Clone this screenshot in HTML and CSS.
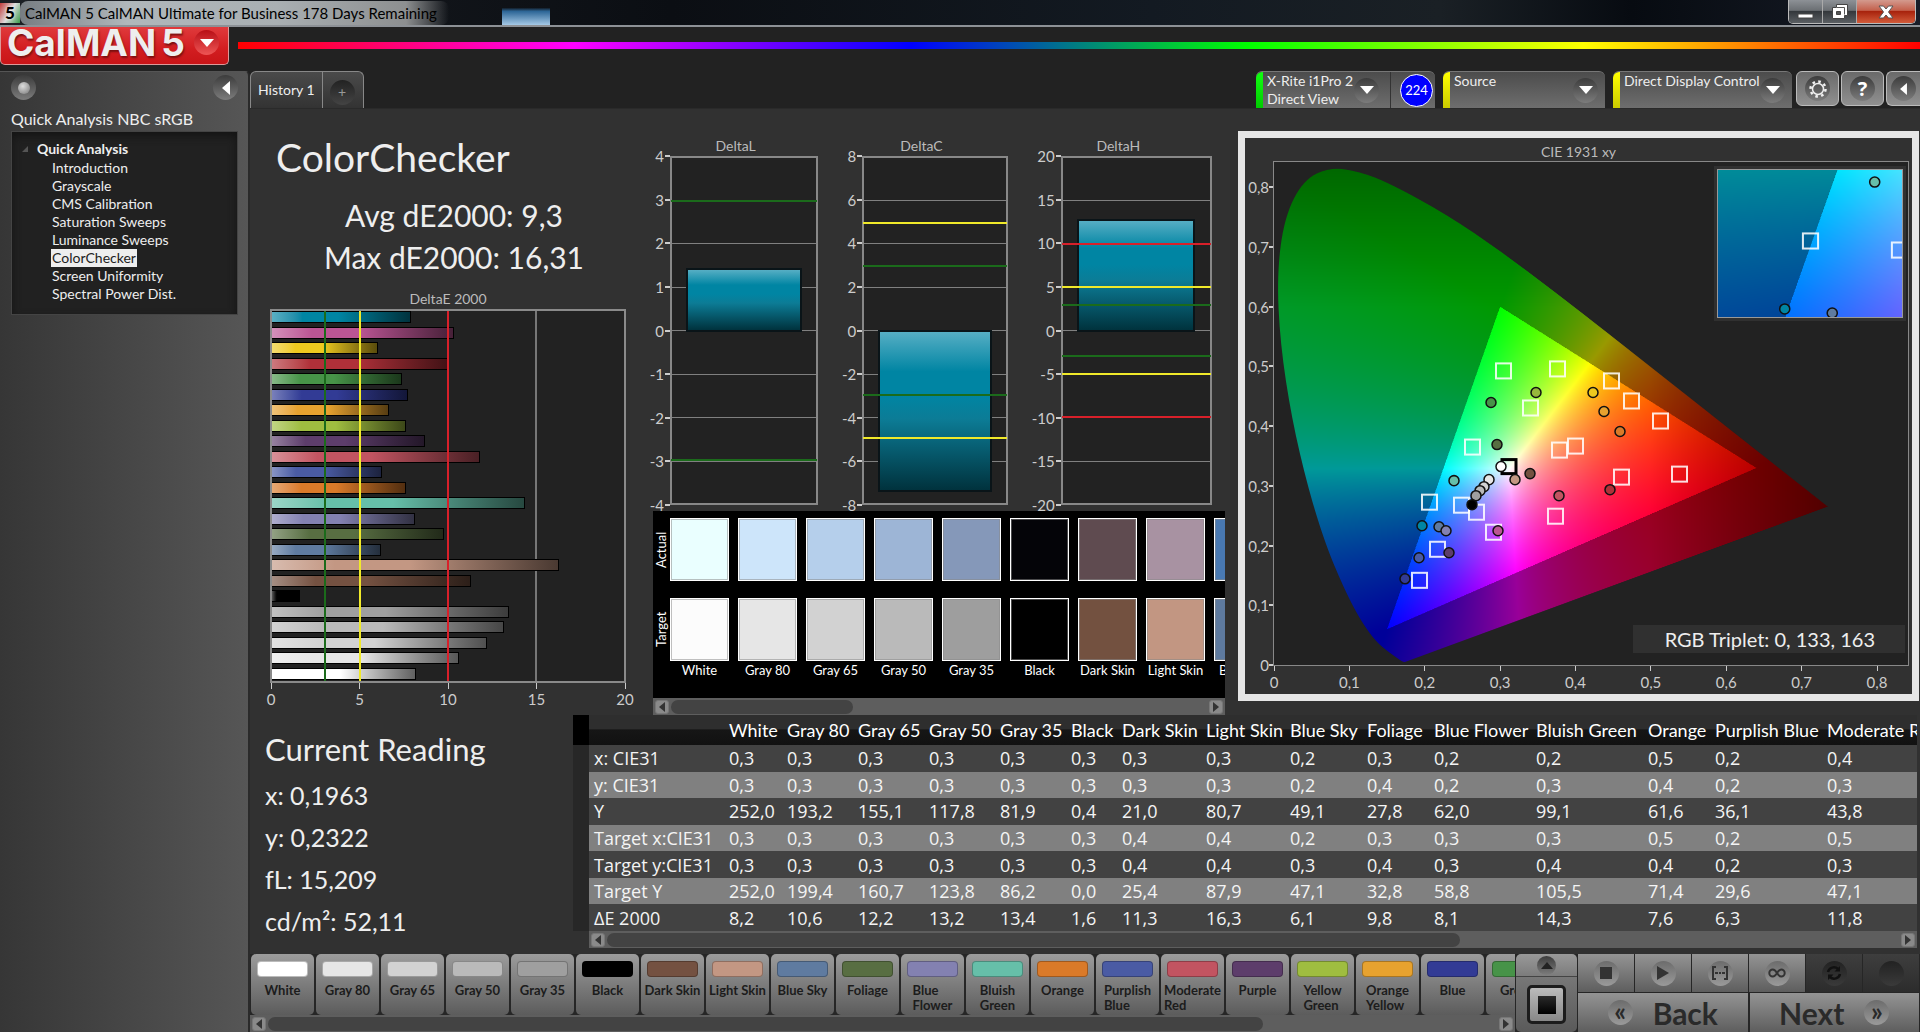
FILE: index.html
```html
<!DOCTYPE html>
<html lang="en">
<head>
<meta charset="utf-8">
<title>CalMAN 5</title>
<link rel="stylesheet" href="styles.css">
</head>
<body>
<div class="app">
  <header class="titlebar">
    <span class="app-icon">5</span>
    <span class="title-text">CalMAN 5 CalMAN Ultimate for Business 178 Days Remaining</span>
    <div class="window-buttons">
      <button class="win" aria-label="Minimize"><svg width="18" height="18" viewBox="0 0 18 18"><rect x="1" y="11" width="15" height="4" fill="#fff" stroke="#444"/></svg></button>
      <button class="win" aria-label="Restore"><svg width="18" height="18" viewBox="0 0 18 18"><path d="M5.500 1.500h11v11h-3v3h-12v-11h4z" fill="#fff" stroke="#444"/><path d="M5.500 8.500h4v3h-4z" fill="#555" stroke="#444"/><path d="M6 4.500h7.500v7" fill="none" stroke="#555"/></svg></button>
      <button class="win win-close" aria-label="Close"><svg width="18" height="18" viewBox="0 0 18 18"><path d="M2 3h4.500L9 6l2.500-3H16l-4.500 6 4.500 6h-4.500L9 12l-2.500 3H2l4.500-6z" fill="#fff" stroke="#555"/></svg></button>
    </div>
  </header>

  <div class="brandbar">
    <button class="logo"><span class="logo-text">CalMAN</span><span class="logo-five">5</span>
      <span class="round red"><svg width="14" height="8" viewBox="0 0 14 8"><path d="M0 0h14L7 8z" fill="#fff"/></svg></span></button>
    <div class="rainbow"></div>
  </div>

  <div class="body">
    <aside class="sidebar">
      <div class="side-top">
        <button class="round" aria-label="Record"><span class="knob"></span></button>
        <button class="round" aria-label="Collapse"><svg width="8" height="14" viewBox="0 0 8 14"><path d="M8 0v14L0 7z" fill="#fff"/></svg></button>
      </div>
      <h2 class="side-title">Quick Analysis NBC sRGB</h2>
      <nav class="tree">
        <div class="tree-root"><svg width="6" height="6" viewBox="0 0 6 6"><path d="M6 0v6H0z" fill="#555"/></svg>Quick Analysis</div>
        <a href="#">Introduction</a>
        <a href="#">Grayscale</a>
        <a href="#">CMS Calibration</a>
        <a href="#">Saturation Sweeps</a>
        <a href="#">Luminance Sweeps</a>
        <a href="#" class="selected">ColorChecker</a>
        <a href="#">Screen Uniformity</a>
        <a href="#">Spectral Power Dist.</a>
      </nav>
    </aside>

    <main class="main">
      <div class="strip">
        <div class="tabs">
          <button class="tab">History 1</button>
          <button class="tab tab-add" aria-label="Add tab"><span class="round dark">+</span></button>
        </div>
        <div class="devices">
          <div class="device">
            <i class="flag green"></i>
            <span class="device-name">X-Rite i1Pro 2<br>Direct View</span>
            <button class="round" aria-label="Meter menu"><svg width="14" height="8" viewBox="0 0 14 8"><path d="M0 0h14L7 8z" fill="#fff"/></svg></button>
            <span class="count-cell"><span class="count">224</span></span>
          </div>
          <div class="device source">
            <i class="flag"></i>
            <span class="device-name">Source</span>
            <button class="round" aria-label="Source menu"><svg width="14" height="8" viewBox="0 0 14 8"><path d="M0 0h14L7 8z" fill="#fff"/></svg></button>
          </div>
          <div class="device display">
            <i class="flag"></i>
            <span class="device-name">Direct Display Control</span>
            <button class="round" aria-label="Display menu"><svg width="14" height="8" viewBox="0 0 14 8"><path d="M0 0h14L7 8z" fill="#fff"/></svg></button>
          </div>
          <div class="tools">
            <button class="tool" aria-label="Settings"><span class="round"><svg width="20" height="20" viewBox="0 0 20 20" fill="none" stroke="#eee"><circle cx="10" cy="10" r="5.500" stroke-width="1.500"/><circle cx="10" cy="10" r="7.500" stroke-width="2.500" stroke-dasharray="2.600 3.290"/></svg></span></button>
            <button class="tool" aria-label="Help"><span class="round help">?</span></button>
            <button class="tool last" aria-label="Hide"><span class="round"><svg width="7" height="12" viewBox="0 0 8 14"><path d="M8 0v14L0 7z" fill="#fff"/></svg></span></button>
          </div>
        </div>
      </div>

      <div class="workspace">
        <div class="upper">
          <section class="summary">
            <h1>ColorChecker</h1>
            <p class="stat">Avg dE2000: 9,3</p>
            <p class="stat">Max dE2000: 16,31</p>
            <h3 class="chart-title">DeltaE 2000</h3>
            <div class="bars">
              <i class="grid" style="left:50%"></i><i class="grid" style="left:75%"></i>
              <b style="width:39.400%;--c:#0085a3"></b>
              <b style="width:51.800%;--c:#bb5594"></b>
              <b style="width:30.100%;--c:#eec91f"></b>
              <b style="width:50.100%;--c:#b03039"></b>
              <b style="width:37%;--c:#479348"></b>
              <b style="width:38.600%;--c:#323b95"></b>
              <b style="width:33.200%;--c:#e7a22f"></b>
              <b style="width:38%;--c:#9fbd40"></b>
              <b style="width:43.400%;--c:#5d3d6b"></b>
              <b style="width:59%;--c:#c25461"></b>
              <b style="width:31.300%;--c:#4a5ba4"></b>
              <b style="width:38%;--c:#da7a29"></b>
              <b style="width:72%;--c:#66bfa9"></b>
              <b style="width:40.500%;--c:#8381b1"></b>
              <b style="width:49%;--c:#586e42"></b>
              <b style="width:31%;--c:#5f7ba0"></b>
              <b style="width:81.500%;--c:#c39783"></b>
              <b style="width:56.600%;--c:#745141"></b>
              <b style="width:8%;--c:#000"></b>
              <b style="width:67.200%;--c:#9f9f9f"></b>
              <b style="width:65.800%;--c:#bababa"></b>
              <b style="width:61.200%;--c:#d2d2d2"></b>
              <b style="width:53.200%;--c:#e6e6e6"></b>
              <b style="width:41%;--c:#fff"></b>
              <i class="limit lgreen" style="left:15%"></i><i class="limit lyellow" style="left:25%"></i><i class="limit lred" style="left:50%"></i>
            </div>
            <div class="axis-x"><span>0</span><span>5</span><span>10</span><span>15</span><span>20</span></div>
          </section>

          <section class="middle">
            <div class="deltas">
              <figure class="delta narrow">
                <figcaption class="chart-title">DeltaL</figcaption>
                <div class="delta-row">
                  <div class="axis-y"><span>4</span><span>3</span><span>2</span><span>1</span><span>0</span><span>-1</span><span>-2</span><span>-3</span><span>-4</span></div>
                  <div class="plot">
                    <b style="top:32%;height:18.500%"></b>
                    <i class="lgreen" style="top:12.500%"></i><i class="lgreen" style="top:87.500%"></i>
                  </div>
                </div>
              </figure>
              <figure class="delta">
                <figcaption class="chart-title">DeltaC</figcaption>
                <div class="delta-row">
                  <div class="axis-y"><span>8</span><span>6</span><span>4</span><span>2</span><span>0</span><span>-2</span><span>-4</span><span>-6</span><span>-8</span></div>
                  <div class="plot">
                    <b style="top:49.800%;height:47%"></b>
                    <i class="lyellow" style="top:18.750%"></i><i class="lgreen" style="top:31.250%"></i><i class="lgreen" style="top:68.750%"></i><i class="lyellow" style="top:81.250%"></i>
                  </div>
                </div>
              </figure>
              <figure class="delta wide">
                <figcaption class="chart-title">DeltaH</figcaption>
                <div class="delta-row">
                  <div class="axis-y"><span>20</span><span>15</span><span>10</span><span>5</span><span>0</span><span>-5</span><span>-10</span><span>-15</span><span>-20</span></div>
                  <div class="plot">
                    <b style="top:17.700%;height:32.800%"></b>
                    <i class="lred" style="top:25%"></i><i class="lyellow" style="top:37.500%"></i><i class="lgreen" style="top:42.500%"></i><i class="lgreen" style="top:57.500%"></i><i class="lyellow" style="top:62.500%"></i><i class="lred" style="top:75%"></i>
                  </div>
                </div>
              </figure>
            </div>
            <div class="swatches">
              <div class="swatch-side"><span>Actual</span><span>Target</span></div>
              <div class="swatch-list">
                <div class="swatch"><i style="background:#eaffff"></i><i style="background:#fcfcfc"></i><span>White</span></div>
                <div class="swatch"><i style="background:#cde5fa"></i><i style="background:#e6e6e6"></i><span>Gray 80</span></div>
                <div class="swatch"><i style="background:#b5cfeb"></i><i style="background:#d2d2d2"></i><span>Gray 65</span></div>
                <div class="swatch"><i style="background:#9db5d6"></i><i style="background:#bababa"></i><span>Gray 50</span></div>
                <div class="swatch"><i style="background:#8598b9"></i><i style="background:#9e9e9e"></i><span>Gray 35</span></div>
                <div class="swatch"><i style="background:#040408"></i><i style="background:#000"></i><span>Black</span></div>
                <div class="swatch"><i style="background:#5f4b50"></i><i style="background:#735140"></i><span>Dark Skin</span></div>
                <div class="swatch"><i style="background:#a892a2"></i><i style="background:#c29682"></i><span>Light Skin</span></div>
                <div class="swatch"><i style="background:#4979b2"></i><i style="background:#5e7a9f"></i><span>Blue Sky</span></div>
              </div>
            </div>
            <div class="scroll"><button class="arrow left" aria-label="Scroll left"></button><div class="track"><div class="thumb" style="width:34%"></div></div><button class="arrow right" aria-label="Scroll right"></button></div>
          </section>

          <section class="cie">
            <h3 class="chart-title">CIE 1931 xy</h3>
            <div class="cie-row">
              <div class="cie-y"><span>0,8</span><span>0,7</span><span>0,6</span><span>0,5</span><span>0,4</span><span>0,3</span><span>0,2</span><span>0,1</span><span>0</span></div>
              <div class="cie-plot">
                <canvas id="cie" width="1268" height="1004"></canvas>
                <svg class="marks" viewBox="-1 0 634 502" preserveAspectRatio="none">
                  <g class="sq">
                    <rect x="221" y="201" width="15" height="15"/><rect x="275" y="199" width="15" height="15"/><rect x="248" y="238" width="15" height="15"/>
                    <rect x="329" y="211" width="15" height="15"/><rect x="349" y="231" width="15" height="15"/><rect x="378" y="251" width="15" height="15"/>
                    <rect x="190" y="277" width="15" height="15"/><rect x="277" y="280" width="15" height="15"/><rect x="293" y="276" width="15" height="15"/>
                    <rect x="339" y="307" width="15" height="15"/><rect x="397" y="304" width="15" height="15"/><rect x="273" y="346" width="15" height="15"/>
                    <rect x="147" y="332" width="15" height="15"/><rect x="179" y="335" width="15" height="15"/><rect x="194" y="342" width="15" height="15"/>
                    <rect x="211" y="362" width="15" height="15"/><rect x="155" y="379" width="15" height="15"/><rect x="137" y="410" width="15" height="15"/>
                    <rect class="ref" x="227" y="297" width="14" height="14"/>
                  </g>
                  <g class="dots">
                    <circle cx="261" cy="230" r="5" fill="#97b83c"/><circle cx="216" cy="240" r="5" fill="#479348"/><circle cx="318" cy="230" r="5" fill="#eec91f"/>
                    <circle cx="329" cy="249" r="5" fill="#e7a22f"/><circle cx="345" cy="269" r="5" fill="#da7a29"/><circle cx="222" cy="282" r="5" fill="#586e42"/>
                    <circle cx="214" cy="317" r="5" fill="#e6e6e6"/><circle cx="209" cy="324" r="5" fill="#d2d2d2"/><circle cx="205" cy="328" r="5" fill="#bababa"/><circle cx="201" cy="333" r="5" fill="#9f9f9f"/>
                    <circle cx="226" cy="304" r="5" fill="#fff"/><circle cx="197" cy="342" r="5" fill="#000"/><circle cx="179" cy="318" r="5" fill="#66bfa9"/>
                    <circle cx="240" cy="317" r="5" fill="#c39783"/><circle cx="255" cy="311" r="5" fill="#745141"/><circle cx="284" cy="333" r="5" fill="#c25461"/>
                    <circle cx="335" cy="327" r="5" fill="#b03039"/><circle cx="147" cy="363" r="5" fill="#0085a3"/><circle cx="164" cy="364" r="5" fill="#5f7ba0"/>
                    <circle cx="171" cy="368" r="5" fill="#8381b1"/><circle cx="223" cy="368" r="5" fill="#bb5594"/><circle cx="174" cy="390" r="5" fill="#5d3d6b"/>
                    <circle cx="144" cy="395" r="5" fill="#4a5ba4"/><circle cx="130" cy="416" r="5" fill="#323b95"/>
                  </g>
                </svg>
                <div class="inset">
                  <canvas id="inset" width="370" height="296"></canvas>
                  <svg class="marks" viewBox="0 0 182 146" preserveAspectRatio="none">
                    <g class="sq"><rect x="84" y="63" width="15" height="15"/><rect x="172" y="72" width="15" height="15"/></g>
                    <g class="dots"><circle cx="155" cy="12" r="5" fill="#66bfa9"/><circle cx="66" cy="138" r="5" fill="#0085a3"/><circle cx="113" cy="142" r="5" fill="#5f7ba0"/></g>
                  </svg>
                </div>
                <div class="triplet">RGB Triplet: 0, 133, 163</div>
              </div>
            </div>
            <div class="cie-x"><span>0</span><span>0,1</span><span>0,2</span><span>0,3</span><span>0,4</span><span>0,5</span><span>0,6</span><span>0,7</span><span>0,8</span></div>
          </section>
        </div>

        <div class="lower">
          <section class="reading">
            <h2>Current Reading</h2>
            <p>x: 0,1963</p>
            <p>y: 0,2322</p>
            <p>fL: 15,209</p>
            <p>cd/m²: 52,11</p>
          </section>
          <section class="results">
            <table>
              <colgroup><col class="c0"><col class="c1"><col class="c2"><col class="c3"><col class="c3"><col class="c3"><col class="c3"><col class="c4"><col class="c5"><col class="c5"><col class="c6"><col class="c7"><col class="c8"><col class="c9"><col class="c7"><col class="c9"><col></colgroup>
              <thead><tr><th class="rh"></th><th></th><th>White</th><th>Gray 80</th><th>Gray 65</th><th>Gray 50</th><th>Gray 35</th><th>Black</th><th>Dark Skin</th><th>Light Skin</th><th>Blue Sky</th><th>Foliage</th><th>Blue Flower</th><th>Bluish Green</th><th>Orange</th><th>Purplish Blue</th><th>Moderate Red</th></tr></thead>
              <tbody>
                <tr><td class="rh"></td><th>x: CIE31</th><td>0,3</td><td>0,3</td><td>0,3</td><td>0,3</td><td>0,3</td><td>0,3</td><td>0,3</td><td>0,3</td><td>0,2</td><td>0,3</td><td>0,2</td><td>0,2</td><td>0,5</td><td>0,2</td><td>0,4</td></tr>
                <tr><td class="rh"></td><th>y: CIE31</th><td>0,3</td><td>0,3</td><td>0,3</td><td>0,3</td><td>0,3</td><td>0,3</td><td>0,3</td><td>0,3</td><td>0,2</td><td>0,4</td><td>0,2</td><td>0,3</td><td>0,4</td><td>0,2</td><td>0,3</td></tr>
                <tr><td class="rh"></td><th>Y</th><td>252,0</td><td>193,2</td><td>155,1</td><td>117,8</td><td>81,9</td><td>0,4</td><td>21,0</td><td>80,7</td><td>49,1</td><td>27,8</td><td>62,0</td><td>99,1</td><td>61,6</td><td>36,1</td><td>43,8</td></tr>
                <tr><td class="rh"></td><th>Target x:CIE31</th><td>0,3</td><td>0,3</td><td>0,3</td><td>0,3</td><td>0,3</td><td>0,3</td><td>0,4</td><td>0,4</td><td>0,2</td><td>0,3</td><td>0,3</td><td>0,3</td><td>0,5</td><td>0,2</td><td>0,5</td></tr>
                <tr><td class="rh"></td><th>Target y:CIE31</th><td>0,3</td><td>0,3</td><td>0,3</td><td>0,3</td><td>0,3</td><td>0,3</td><td>0,4</td><td>0,4</td><td>0,3</td><td>0,4</td><td>0,3</td><td>0,4</td><td>0,4</td><td>0,2</td><td>0,3</td></tr>
                <tr><td class="rh"></td><th>Target Y</th><td>252,0</td><td>199,4</td><td>160,7</td><td>123,8</td><td>86,2</td><td>0,0</td><td>25,4</td><td>87,9</td><td>47,1</td><td>32,8</td><td>58,8</td><td>105,5</td><td>71,4</td><td>29,6</td><td>47,1</td></tr>
                <tr><td class="rh"></td><th>ΔE 2000</th><td>8,2</td><td>10,6</td><td>12,2</td><td>13,2</td><td>13,4</td><td>1,6</td><td>11,3</td><td>16,3</td><td>6,1</td><td>9,8</td><td>8,1</td><td>14,3</td><td>7,6</td><td>6,3</td><td>11,8</td></tr>
              </tbody>
            </table>
            <div class="scroll"><button class="arrow left" aria-label="Scroll left"></button><div class="track"><div class="thumb" style="width:66%"></div></div><button class="arrow right" aria-label="Scroll right"></button></div>
          </section>
        </div>
      </div>

      <footer class="bottom">
        <div class="patches">
          <div class="patch-list">
            <button class="patch"><i style="background:#fff"></i>White</button>
            <button class="patch"><i style="background:#e6e6e6"></i>Gray 80</button>
            <button class="patch"><i style="background:#d2d2d2"></i>Gray 65</button>
            <button class="patch"><i style="background:#bababa"></i>Gray 50</button>
            <button class="patch"><i style="background:#9f9f9f"></i>Gray 35</button>
            <button class="patch"><i style="background:#000"></i>Black</button>
            <button class="patch"><i style="background:#745141"></i>Dark Skin</button>
            <button class="patch"><i style="background:#c39783"></i>Light Skin</button>
            <button class="patch"><i style="background:#5f7ba0"></i>Blue Sky</button>
            <button class="patch"><i style="background:#586e42"></i>Foliage</button>
            <button class="patch"><i style="background:#8381b1"></i><span>Blue<br>Flower</span></button>
            <button class="patch"><i style="background:#66bfa9"></i><span>Bluish<br>Green</span></button>
            <button class="patch"><i style="background:#da7a29"></i>Orange</button>
            <button class="patch"><i style="background:#4a5ba4"></i><span>Purplish<br>Blue</span></button>
            <button class="patch"><i style="background:#c25461"></i><span>Moderate<br>Red</span></button>
            <button class="patch"><i style="background:#5d3d6b"></i>Purple</button>
            <button class="patch"><i style="background:#9fbd40"></i><span>Yellow<br>Green</span></button>
            <button class="patch"><i style="background:#e7a22f"></i><span>Orange<br>Yellow</span></button>
            <button class="patch"><i style="background:#323b95"></i>Blue</button>
            <button class="patch"><i style="background:#479348"></i>Green</button>
          </div>
          <div class="scroll"><button class="arrow left" aria-label="Scroll left"></button><div class="track"><div class="thumb" style="width:81%"></div></div><button class="arrow right" aria-label="Scroll right"></button></div>
        </div>
        <div class="pattern">
          <button class="pattern-up" aria-label="Expand"><span class="round small"><svg width="12" height="7" viewBox="0 0 12 7"><path d="M0 7h12L6 0z" fill="#222"/></svg></span></button>
          <button class="pattern-window" aria-label="Pattern window"><span></span></button>
        </div>
        <div class="transport">
          <div class="media">
            <button aria-label="Stop"><span class="round"><svg width="12" height="12" viewBox="0 0 12 12"><path d="M0 0h12v12H0z" fill="#333"/></svg></span></button>
            <button aria-label="Play"><span class="round"><svg width="12" height="14" viewBox="0 0 12 14"><path d="M0 0l12 7-12 7z" fill="#333"/></svg></span></button>
            <button aria-label="Read series"><span class="round"><svg width="18" height="14" viewBox="0 0 18 14" fill="none" stroke="#333" stroke-width="2"><path d="M5 1H2v12h3M13 1h3v12h-3M4 7h3M8 7h2M11 7h3"/></svg></span></button>
            <button aria-label="Continuous"><span class="round"><svg width="18" height="10" viewBox="0 0 18 10" fill="none" stroke="#333" stroke-width="2"><path d="M9 5C7.500 2.500 6.500 1.500 4.800 1.500a3.500 3.500 0 0 0 0 7C6.500 8.500 7.500 7.500 9 5s2.500-3.500 4.200-3.500a3.500 3.500 0 0 1 0 7C11.500 8.500 10.500 7.500 9 5z"/></svg></span></button>
            <button class="off" aria-label="Refresh"><span class="round"><svg width="16" height="16" viewBox="0 0 16 16" fill="none" stroke="#111" stroke-width="2.500"><path d="M2 7a6 6 0 0 1 10-3M14 9a6 6 0 0 1-10 3"/><path d="M14 1v5.500H8.500zM2 15V9.500h5.500z" fill="#111" stroke="none"/></svg></span></button>
            <button class="off" aria-label="Unused"><span class="round"></span></button>
          </div>
          <div class="nav">
            <button><span class="round">«</span>Back</button>
            <button>Next<span class="round">»</span></button>
          </div>
        </div>
      </footer>
    </main>
  </div>
</div>
<script src="chart.js"></script>
</body>
</html>
```
FILE: styles.css
```css
* { box-sizing: border-box; }
body { margin: 0; background: #222; color: #eee; font: 14px/18px Lato, "Open Sans", sans-serif; }
button { font: inherit; color: inherit; border: 0; padding: 0; background: none; }
h1, h2, h3, p, figure { margin: 0; font-weight: 400; }
svg { display: block; }
.app { min-height: 100vh; display: flex; flex-direction: column; overflow: hidden; }

.round { flex: none; display: flex; align-items: center; justify-content: center; width: 25px; height: 25px; border-radius: 50%; background: linear-gradient(#3c3c3c, #7c7c7c); }
.round.dark { background: linear-gradient(#222, #444); color: #999; }
.round.red { background: linear-gradient(#b80f16, #ee5555); }
.round.small { width: 19px; height: 19px; }

.titlebar { display: flex; align-items: center; height: 27px; border-bottom: 2px solid #8d9196; background: linear-gradient(transparent 30%, #2c6596 45%, #a5c9e6) 502px 0 / 48px 100% no-repeat, linear-gradient(90deg, #1b1f24, #0b0e13 35%, #131a22 60%, #1a2025 75%, #070b11 85%, #181d28); }
.app-icon { width: 20px; height: 20px; margin-top: 1px; line-height: 20px; text-align: center; font-weight: 900; font-size: 17px; color: #000; text-shadow: 0 0 3px #fff; background: linear-gradient(120deg, #c23a3a, #ddd 50%, #3a9a4a); }
.title-text { padding: 0 12px 0 5px; color: #000; font-size: 15px; line-height: 24px; border-radius: 8px; background: linear-gradient(90deg, #777d82, #b0b7bb 25%, #a9afb2 60%, #8d8f90 90%, transparent); }
.window-buttons { display: flex; align-self: flex-start; margin-left: auto; margin-right: 4px; height: 24px; border: 1px solid #bbb; border-top: 0; border-radius: 0 0 5px 5px; overflow: hidden; }
.win { display: flex; align-items: center; justify-content: center; width: 34px; border-right: 1px solid #aaa; background: linear-gradient(#8d9196, #6b6f73 45%, #34383c 50%, #5b5f63); }
.win-close { width: 58px; border: 0; background: linear-gradient(#d39a8e, #c4604c 45%, #a8230d 50%, #d25b3a); }

.brandbar { display: flex; align-items: flex-start; height: 44px; gap: 9px; background: #222; }
.logo { flex: none; display: flex; align-items: center; width: 229px; height: 38px; padding: 0 9px 6px 6px; border: 1px solid #d99; border-top: 0; border-radius: 0 0 5px 5px; background: linear-gradient(#e03a3c, #d21d20 60%, #c91518); font-family: Inter, sans-serif; font-weight: 700; color: #eee; text-shadow: 1px 2px 2px #7a1010; }
.logo-text { font-size: 37px; }
.logo-five { font-size: 37px; margin: 0 auto 0 5px; }
.rainbow { flex: 1; height: 7px; margin-top: 15px; background: linear-gradient(90deg, red, magenta, blue, lime, yellow, red); }

.body { flex: 1; display: grid; grid-template-columns: 250px minmax(0, 1fr); }
.sidebar { padding: 3px 10px 0 11px; background: linear-gradient(90deg, #363636, #565656); border-top: 1px solid #555; border-right: 2px solid #2a2a2a; border-radius: 0 5px 0 0; }
.side-top { display: flex; justify-content: space-between; }
.knob { width: 12px; height: 12px; border-radius: 50%; background: radial-gradient(circle at 40% 35%, #ddd, #777); }
.side-title { margin: 8px 0 0; padding-bottom: 1px; font-size: 16px; line-height: 22px; }
.tree { display: flex; flex-direction: column; align-items: flex-start; height: 184px; padding: 7px 10px; border: 1px solid #444; background: #212121; box-shadow: inset 0 4px 8px #141414; }
.tree-root { display: flex; align-items: center; gap: 9px; height: 20px; font-weight: 700; }
.tree a { margin-left: 29px; padding: 0 1px; font-size: 14px; line-height: 18px; color: #eee; text-decoration: none; white-space: nowrap; }
.tree a.selected { background: #eee; color: #222; }

.main { display: flex; flex-direction: column; }
.strip { display: flex; justify-content: space-between; height: 37px; }
.tabs { display: flex; border: 1px solid #888; border-bottom: 0; border-radius: 6px 6px 0 0; overflow: hidden; background: linear-gradient(#4a4a4a, #333); }
.tab { padding: 2px 7px; }
.tab-add { padding: 4px 8px 0 7px; border-left: 1px solid #888; }
.devices { display: flex; gap: 8px; }
.device { display: flex; width: 179px; border-top: 1px solid #777; border-radius: 6px 6px 0 0; background: linear-gradient(#4c4c4c, #6e6e6e); overflow: hidden; }
.source { width: 162px; }
.flag { width: 7px; background: linear-gradient(#ff0, #cc0); border-radius: 6px 0 0 0; }
.flag.green { background: linear-gradient(#1f1, #0c0); }
.device-name { flex: 1; padding-left: 4px; line-height: 18px; white-space: nowrap; }
.device > .round { align-self: center; margin-right: 7px; }
.device:first-child > .round { margin-right: 11px; }
.count-cell { display: flex; align-items: center; padding: 0 2px 0 9px; border-left: 1px solid #333; }
.count { display: flex; align-items: center; justify-content: center; width: 33px; height: 33px; border: 1px solid #fff; border-radius: 50%; background: #00f; font-size: 13px; color: #fff; }
.tools { display: flex; gap: 2px; margin-left: -4px; }
.tool { display: flex; align-items: center; justify-content: center; width: 43px; height: 35px; border: 1px solid #bbb; border-radius: 6px; background: linear-gradient(#6a6a6a, #909090); }
.tool.last { width: 34px; border-right: 0; border-radius: 6px 0 0 6px; }
.help { font: 700 20px/25px "Open Sans", sans-serif; color: #fff; }

.workspace { flex: 1; background: #313131; border-top: 1px solid #2a2a2a; }
.upper { display: grid; grid-template-columns: minmax(0, 395fr) minmax(0, 593fr) minmax(0, 682fr); align-items: start; }
.chart-title { text-align: center; font-size: 14px; line-height: 20px; color: #bbb; }

.summary { padding: 22px 19px 0 20px; }
.summary h1 { padding: 0 6px; font-size: 39px; line-height: 52px; white-space: nowrap; }
.stat { padding-left: 12px; text-align: center; font-size: 30px; line-height: 42px; white-space: nowrap; }
.summary h1 + .stat { margin-top: 11px; }
.summary .chart-title { margin-top: 11px; }
.bars { position: relative; display: flex; flex-direction: column; justify-content: space-between; height: 374px; padding: 0 0 1px; border: 2px solid #8a8a8a; background: #222; }
.bars b { z-index: 1; height: 12px; border: 1px solid #000; border-left: 0; background: linear-gradient(90deg, color-mix(in srgb, var(--c) 65%, #fff), var(--c) 22%, var(--c) 48%, color-mix(in srgb, var(--c) 38%, #000)); }
.grid, .limit { position: absolute; top: 0; bottom: 0; width: 2px; margin-left: -1px; background: #777; }
.limit { z-index: 2; }
.lgreen { background: #1b6b1b; }
.lyellow { background: #f0e92a; }
.lred { background: #d8202a; }
.axis-x { display: flex; justify-content: space-between; margin: 0 -14px; color: #ccc; }
.axis-x span { width: 30px; text-align: center; font-size: 15px; }
.axis-x span::before { content: ""; display: block; width: 1px; height: 6px; margin: 0 auto 1px; background: #ccc; }

.middle { padding: 27px 13px 0 8px; }
.deltas { display: grid; grid-template-columns: 165fr 172fr 187fr; gap: 17px; padding-right: 13px; }
.delta-row { display: grid; grid-template-columns: 27px minmax(0, 1fr); }
.narrow .delta-row { grid-template-columns: 17px minmax(0, 1fr); }
.wide .delta-row { grid-template-columns: 36px minmax(0, 1fr); }
.axis-y { display: flex; flex-direction: column; justify-content: space-between; margin: -9px 0; color: #ccc; }
.axis-y span { display: flex; align-items: center; justify-content: flex-end; font-size: 15px; }
.axis-y span::after { content: ""; flex: none; width: 5px; height: 2px; margin-left: 1px; background: #ccc; }
.plot { position: relative; height: 349px; border: 2px solid #888; background: repeating-linear-gradient(#222 0 42px, #808080 42px 43px, #222 43px 43.500px); }
.plot i { position: absolute; left: -1px; right: -1px; height: 2px; margin-top: -1px; }
.plot b { position: absolute; left: 10%; width: 80%; border: 2px solid #0a1418; background: linear-gradient(#56aec4, #0085a3 25%, #0085a3 40%, #0c7c96 55%, #00323d); }

.swatches { position: relative; display: flex; height: 187px; margin-top: 6px; padding-top: 7px; background: #000; overflow: hidden; }
.swatch-side { flex: none; display: flex; flex-direction: column; gap: 17px; width: 17px; }
.swatch-side span { height: 63px; writing-mode: vertical-rl; rotate: 180deg; line-height: 17px; text-align: center; font-size: 13px; color: #fff; }
.swatch-list { flex: 1; display: flex; gap: 9px; overflow: hidden; }
.swatch { flex: none; display: flex; flex-direction: column; align-items: center; width: 59px; font-size: 13px; color: #fff; white-space: nowrap; }
.swatch i { width: 59px; height: 63px; margin-bottom: 17px; border: 1px solid #fff; box-shadow: inset 0 0 0 1px #8888; }
.swatch i + i { margin-bottom: 0; }

.scroll { display: flex; align-items: center; height: 17px; padding: 0 2px; background: #5e5e5e; }
.arrow { flex: none; display: flex; align-items: center; justify-content: center; width: 14px; height: 14px; border: 1px solid #777; border-radius: 3px; background: #8a8a8a; }
.arrow::before { content: ""; border: 5px solid transparent; border-left: 0; border-right: 6px solid #333; }
.arrow.right::before { border-right: 0; border-left: 6px solid #333; }
.track { flex: 1; padding: 0 2px; }
.thumb { height: 14px; border-radius: 7px; background: #434343; }

.cie { margin: 22px 1px 0 0; padding: 4px 4px 0; border: 7px solid #e6e6e6; color: #ccc; }
.cie-row { display: grid; grid-template-columns: 25px minmax(0, 1fr); }
.cie-y { display: flex; flex-direction: column; justify-content: space-between; padding-top: 16px; margin-bottom: -9px; }
.cie-y span { display: flex; align-items: center; justify-content: flex-end; font-size: 15px; }
.cie-y span::after { content: ""; flex: none; width: 5px; height: 2px; background: #ccc; }
.cie-plot { position: relative; height: 503px; background: #222; outline: 1px solid #888; }
.cie-plot canvas, .marks { position: absolute; inset: 0; width: 100%; height: 100%; }
.sq rect { fill: none; stroke: #fffd; stroke-width: 2; }
.sq .ref { stroke: #000; stroke-width: 3; }
.dots circle { stroke: #111; stroke-width: 1.500; }
.inset { position: absolute; top: 7px; right: 5px; width: 186px; height: 149px; border: 1px solid #999; outline: 3px solid #303030; overflow: hidden; }
.triplet { position: absolute; right: 3px; bottom: 12px; width: 272px; padding-right: 30px; text-align: right; font-size: 20px; line-height: 28px; color: #eee; background: #303030; }
.cie-x { display: flex; justify-content: space-between; height: 29px; margin: 0 16px 0 10px; }
.cie-x span { width: 30px; text-align: center; font-size: 15px; line-height: 18px; }
.cie-x span::before { content: ""; display: block; width: 1px; height: 6px; margin: 0 auto 2px; background: #ccc; }

.lower { display: grid; grid-template-columns: 323px minmax(0, 1fr); height: 238px; }
.reading { padding: 15px 0 0 15px; white-space: nowrap; }
.reading h2 { font-size: 31px; line-height: 38px; margin-bottom: 6px; }
.reading p { font-size: 25px; line-height: 42px; }
.results { margin-right: 3px; overflow: hidden; }
table { width: 100%; height: 216px; table-layout: fixed; border-collapse: collapse; font: 18px/20px "Open Sans", sans-serif; color: #fff; }
td, th { padding: 0 0 0 5px; text-align: left; font-weight: 400; white-space: nowrap; overflow: hidden; }
thead tr { height: 30px; background: linear-gradient(#2e2e2e 45%, #161616 50%, #111); }
thead th { font-family: Lato, sans-serif; font-size: 18px; }
thead .rh { background: #000; }
tbody tr { background: #424242; color: #f4f4f4; }
tbody tr:nth-child(even) { background: #808080; }
tbody .rh { background: #272727; }
.c0 { width: 16px; } .c1 { width: 135px; } .c2 { width: 58px; } .c3 { width: 71px; } .c4 { width: 51px; }
.c5 { width: 84px; } .c6 { width: 77px; } .c7 { width: 67px; } .c8 { width: 102px; } .c9 { width: 112px; }
.results .scroll { margin-left: 16px; }

.bottom { display: flex; height: 78px; background: #262626; }
.patches { flex: 1; min-width: 0; display: flex; flex-direction: column; }
.patch-list { display: flex; gap: 2px; height: 61px; padding-left: 1px; overflow: hidden; }
.patch { flex: none; display: flex; flex-direction: column; align-items: center; width: 63px; padding-top: 7px; border-radius: 5px; background: linear-gradient(#9c9c9c, #5c5c5c); color: #1c1c1c; font-size: 13px; font-weight: 700; line-height: 15px; text-align: left; white-space: nowrap; }
.patch i { width: 51px; height: 16px; margin-bottom: 6px; border: 1px solid #0004; border-radius: 4px; }
.pattern { display: flex; flex-direction: column; width: 61px; margin: 0 1px; }
.pattern-up { display: flex; justify-content: center; align-items: center; height: 23px; border-radius: 5px 5px 0 0; background: linear-gradient(#999, #7c7c7c); border-bottom: 1px solid #444; }
.pattern-window { flex: 1; display: flex; justify-content: center; align-items: center; border-radius: 0 0 5px 5px; background: linear-gradient(#777, #5a5a5a); }
.pattern-window span { width: 39px; height: 39px; border: 3px solid #1c1c1c; border-radius: 5px; background: linear-gradient(#2a2a2a, #000) center / 18px 18px no-repeat, linear-gradient(#bbb, #888); }
.transport { display: flex; flex-direction: column; gap: 1px; width: 342px; padding-right: 1px; }
.media { display: grid; grid-template-columns: repeat(6, 1fr); gap: 1px; height: 38px; }
.media button, .nav button { display: flex; align-items: center; justify-content: center; background: linear-gradient(#949494, #5e5e5e); }
.media .off { background: linear-gradient(#3e3e3e, #2c2c2c); }
.media .round, .nav .round { background: linear-gradient(#6c6c6c, #9a9a9a); }
.media .off .round { background: linear-gradient(#222, #3a3a3a); }
.nav { flex: 1; display: grid; grid-template-columns: 1fr 1fr; gap: 2px; font: 700 30px/34px Lato, sans-serif; color: #2a2a2a; }
.nav button { gap: 20px; }
.nav .round { font-size: 26px; line-height: 20px; padding-bottom: 4px; }
```
FILE: chart.js
```js
// Spectral locus of the CIE 1931 observer, 400 nm to 700 nm.
const locus = [
  [0.1733, 0.0048], [0.1714, 0.0051], [0.1689, 0.0069], [0.1644, 0.0109], [0.1566, 0.0177],
  [0.144, 0.0297], [0.1355, 0.0399], [0.1241, 0.0578], [0.1096, 0.0868], [0.0913, 0.1327],
  [0.0687, 0.2007], [0.0454, 0.295], [0.0235, 0.4127], [0.0082, 0.5384], [0.0039, 0.6548],
  [0.0139, 0.7502], [0.0389, 0.812], [0.0743, 0.8338], [0.1142, 0.8262], [0.1547, 0.8059],
  [0.2296, 0.7543], [0.3016, 0.6923], [0.3731, 0.6245], [0.4441, 0.5547], [0.5125, 0.4866],
  [0.5752, 0.4242], [0.627, 0.3725], [0.6658, 0.334], [0.6915, 0.3083], [0.719, 0.2809], [0.7347, 0.2653]
];

// Full brightness inside the sRGB triangle, dimmed outside it.
function colorAt(x, y) {
  y = Math.max(y, 0.0001);
  const X = x / y, Z = (1 - x - y) / y;
  const lin = [
    3.2406 * X - 1.5372 - 0.4986 * Z,
    -0.9689 * X + 1.8758 + 0.0415 * Z,
    0.0557 * X - 0.204 + 1.057 * Z
  ];
  const inside = lin.every(v => v >= 0);
  const rgb = lin.map(v => Math.max(v, 0));
  const max = Math.max(...rgb);
  let k = inside ? 255 : 153;
  k *= 1 - 2 * Math.max(0, x - 0.5);
  k *= 1 - 1.4 * Math.max(0, y - 0.6);
  return rgb.map(v => k * v / max);
}

function paint(id, x0, x1, y0, y1, clip) {
  const canvas = document.getElementById(id);
  const { width: w, height: h } = canvas;
  const field = document.createElement("canvas");
  field.width = w;
  field.height = h;
  const fctx = field.getContext("2d");
  const img = fctx.createImageData(w, h);
  for (let j = 0; j < h; j++) {
    for (let i = 0; i < w; i++) {
      const c = colorAt(x0 + (i + 0.5) / w * (x1 - x0), y1 - (j + 0.5) / h * (y1 - y0));
      img.data.set([c[0], c[1], c[2], 255], (j * w + i) * 4);
    }
  }
  fctx.putImageData(img, 0, 0);
  const ctx = canvas.getContext("2d");
  if (clip) {
    const p = locus.map(([x, y]) => [(x - x0) / (x1 - x0) * w, (y1 - y) / (y1 - y0) * h]);
    ctx.beginPath();
    ctx.moveTo(...p[0]);
    for (let i = 1; i < p.length - 1; i++) {
      ctx.quadraticCurveTo(...p[i], (p[i][0] + p[i + 1][0]) / 2, (p[i][1] + p[i + 1][1]) / 2);
    }
    ctx.lineTo(...p[p.length - 1]);
    ctx.closePath();
    ctx.clip();
  }
  ctx.drawImage(field, 0, 0);
}

paint("cie", 0, 0.8412, 0, 0.8423, true);
paint("inset", 0.1643, 0.2512, 0.226, 0.3145, false);
```
